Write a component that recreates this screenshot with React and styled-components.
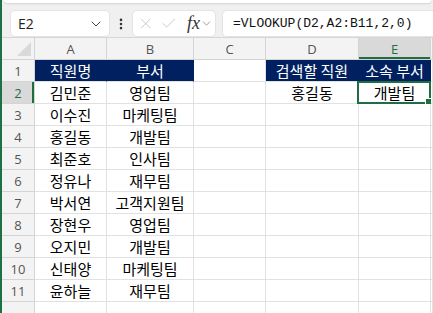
import React from 'react';
import styled, { createGlobalStyle } from 'styled-components';
import { ChevronDown, X, Check, EllipsisVertical } from 'lucide-react';

const GREEN = '#1e6e42';
const NAVY = '#002060';
const GRID = '#e1e1e1';

const GlobalStyle = createGlobalStyle`
  html, body {
    margin: 0;
    padding: 0;
    background: #ffffff;
    overflow: hidden;
  }
  * {
    box-sizing: border-box;
  }
`;

const Window = styled.div`
  display: flex;
  width: 433px;
  height: 313px;
  overflow: hidden;
  border-left: 2px solid #1e7145;
`;

const Main = styled.div`
  display: flex;
  flex-direction: column;
  flex: 1;
  min-width: 0;
`;

const Toolbar = styled.div`
  display: flex;
  flex-direction: column;
  height: 44px;
  background: #f0f0f0;
  border-bottom: 1px solid #d6d6d6;
`;

const RibbonEdge = styled.div`
  height: 3px;
  margin: 0 2px;
  background: #ffffff;
  border-radius: 0 0 6px 6px;
  box-shadow: 0 1px 2px rgba(0, 0, 0, 0.12);
`;

const BarRow = styled.div`
  display: flex;
  align-items: center;
  padding: 7px 0 0 8px;
`;

const NameBox = styled.div`
  display: flex;
  align-items: center;
  justify-content: space-between;
  width: 100px;
  height: 27px;
  padding: 0 5px 0 7px;
  background: #ffffff;
  border-radius: 5px;
  border: 1px solid #e4e4e4;
  font-family: 'Open Sans', 'Noto Sans', sans-serif;
  font-size: 14px;
  color: #222;
`;

const DotsWrap = styled.div`
  display: flex;
  align-items: center;
  justify-content: center;
  width: 22px;
  color: #333;
`;

const FxBox = styled.div`
  display: flex;
  align-items: center;
  gap: 5px;
  width: 84px;
  height: 27px;
  padding: 0 2px 0 4px;
  background: #ffffff;
  border-radius: 5px;
  border: 1px solid #e4e4e4;
  color: #c4c4c4;
`;

const FxLabel = styled.span`
  display: flex;
  align-items: center;
  margin-left: 5px;
  font-family: 'Liberation Serif', serif;
  font-style: italic;
  font-size: 18px;
  color: #333;
`;

const FormulaInput = styled.div`
  display: flex;
  align-items: center;
  flex: 1;
  height: 27px;
  margin-left: 6px;
  padding-left: 10px;
  background: #ffffff;
  border-radius: 5px 0 0 5px;
  border: 1px solid #e4e4e4;
  border-right: none;
  font-family: 'Liberation Mono', monospace;
  font-size: 13px;
  color: #111;
  white-space: nowrap;
`;

const Sheet = styled.div`
  display: grid;
  grid-template-columns: 33px 72px 87px 72px 93px 72px 1fr;
  grid-auto-rows: 22px;
`;

const Corner = styled.div`
  position: relative;
  background: #f3f3f3;
  border-right: 1px solid #d4d4d4;
  border-bottom: 1px solid #d4d4d4;

  &::after {
    content: '';
    position: absolute;
    right: 3px;
    bottom: 3px;
    border-style: solid;
    border-width: 0 0 14px 14px;
    border-color: transparent transparent #d9d9d9 transparent;
  }
`;

const ColHead = styled.div`
  display: flex;
  align-items: center;
  justify-content: center;
  background: ${p => (p.$active ? '#d9d9d9' : '#f3f3f3')};
  border-right: 1px solid #d4d4d4;
  border-bottom: 1px solid #d4d4d4;
  box-shadow: ${p => (p.$active ? `inset 0 -2px 0 ${GREEN}` : 'none')};
  font-family: 'Open Sans', 'Noto Sans', sans-serif;
  font-size: 13px;
  color: ${p => (p.$active ? GREEN : '#555')};
`;

const RowHead = styled(ColHead)`
  box-shadow: ${p => (p.$active ? `inset -2px 0 0 ${GREEN}` : 'none')};
`;

const Cell = styled.div`
  position: relative;
  display: flex;
  align-items: center;
  justify-content: center;
  background: ${p => (p.$navy ? NAVY : '#ffffff')};
  border-right: 1px solid ${p => (p.$navy ? NAVY : GRID)};
  border-bottom: 1px solid ${GRID};
  font-family: 'Noto Sans CJK KR', 'Noto Sans', sans-serif;
  font-size: 15px;
  color: ${p => (p.$navy ? '#ffffff' : '#000000')};
  white-space: nowrap;
`;

const Selection = styled.div`
  position: absolute;
  inset: -1px -1px -1px -2px;
  border: 2px solid ${GREEN};
  pointer-events: none;

  &::after {
    content: '';
    position: absolute;
    right: -4px;
    bottom: -4px;
    width: 6px;
    height: 6px;
    background: ${GREEN};
    border: 1px solid #ffffff;
  }
`;

const columns = ['A', 'B', 'C', 'D', 'E', 'F'];

const rows = [
  ['직원명', '부서', '', '검색할 직원', '소속 부서', ''],
  ['김민준', '영업팀', '', '홍길동', '개발팀', ''],
  ['이수진', '마케팅팀'],
  ['홍길동', '개발팀'],
  ['최준호', '인사팀'],
  ['정유나', '재무팀'],
  ['박서연', '고객지원팀'],
  ['장현우', '영업팀'],
  ['오지민', '개발팀'],
  ['신태양', '마케팅팀'],
  ['윤하늘', '재무팀'],
];

const navyCells = new Set(['0-0', '0-1', '0-3', '0-4']);

export default function App() {
  return (
    <>
      <GlobalStyle />
      <Window>
        <Main>
          <Toolbar>
            <RibbonEdge />
            <BarRow>
              <NameBox>
                E2
                <ChevronDown size={16} strokeWidth={1.5} color="#444" />
              </NameBox>
              <DotsWrap>
                <EllipsisVertical size={14} strokeWidth={2.5} />
              </DotsWrap>
              <FxBox>
                <X size={19} strokeWidth={1.2} />
                <Check size={19} strokeWidth={1.2} />
                <FxLabel>
                  fx
                  <ChevronDown size={13} strokeWidth={1.5} color="#888" />
                </FxLabel>
              </FxBox>
              <FormulaInput>=VLOOKUP(D2,A2:B11,2,0)</FormulaInput>
            </BarRow>
          </Toolbar>
          <Sheet>
            <Corner />
            {columns.map(c => (
              <ColHead key={c} $active={c === 'E'}>
                {c === 'F' ? '' : c}
              </ColHead>
            ))}
            {rows.map((row, r) => (
              <React.Fragment key={r}>
                <RowHead $active={r === 1}>{r + 1}</RowHead>
                {columns.map((c, ci) => {
                  const key = `${r}-${ci}`;
                  return (
                    <Cell key={key} $navy={navyCells.has(key)}>
                      {row[ci] || ''}
                      {r === 1 && ci === 4 && <Selection />}
                    </Cell>
                  );
                })}
              </React.Fragment>
            ))}
            <RowHead />
            {columns.map(c => (
              <Cell key={`last-${c}`} />
            ))}
          </Sheet>
        </Main>
      </Window>
    </>
  );
}
